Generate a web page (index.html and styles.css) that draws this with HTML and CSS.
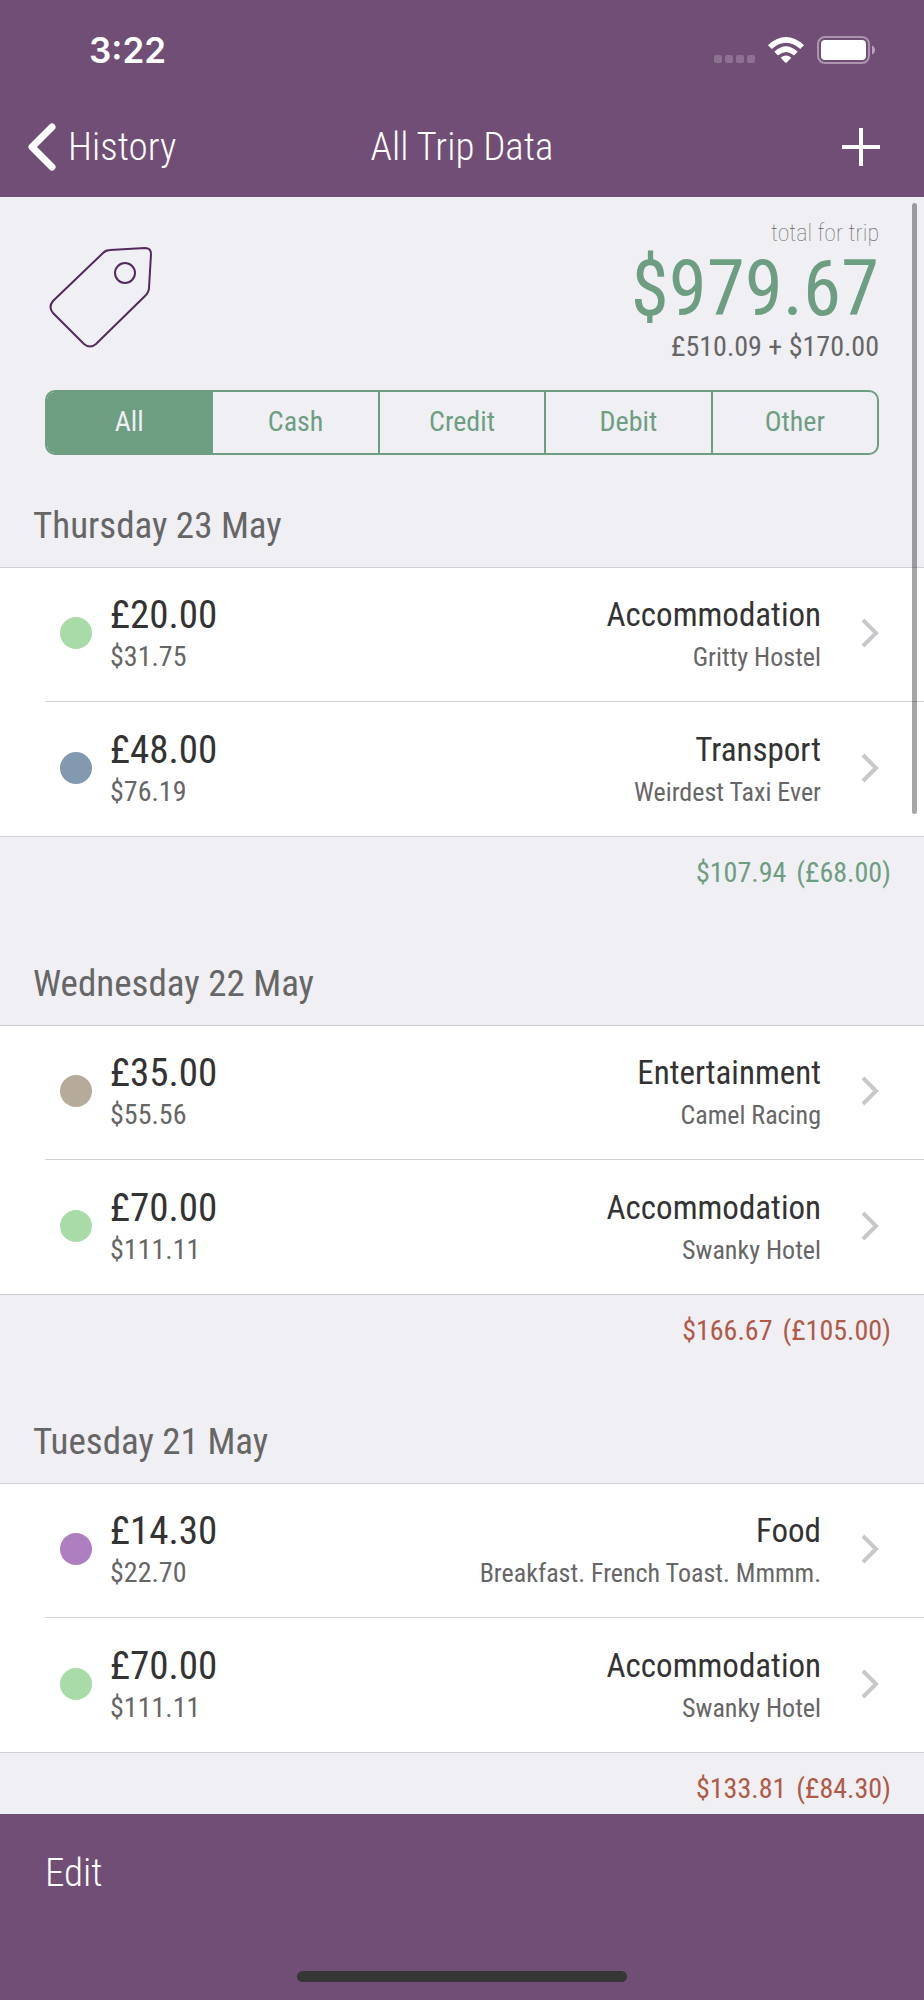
FILE: index.html
```html
<!DOCTYPE html>
<html lang="en">
<head>
  <meta charset="UTF-8"/>
  <meta name="viewport" content="width=device-width, initial-scale=1.0"/>
  <title>All Trip Data</title>
  <link rel="stylesheet" href="styles.css">
</head>
<body>

  <header>
    <div class="status-bar">
      <span class="time">3:22</span>
      <div class="status-icons">
        <svg class="signal" width="42" height="28" viewBox="0 0 42 28" aria-hidden="true">
          <rect x="1" y="19" width="8" height="8" rx="2"/>
          <rect x="12" y="19" width="8" height="8" rx="2"/>
          <rect x="23" y="19" width="8" height="8" rx="2"/>
          <rect x="34" y="19" width="8" height="8" rx="2"/>
        </svg>
        <svg class="wifi" width="38" height="28" viewBox="0 0 38 28" aria-hidden="true">
          <path d="M1 9.2Q19 -7 37 9.2L33.2 13Q19 0.4 4.8 13Z"/>
          <path d="M7.3 15.8Q19 4.8 30.7 15.8L27 19.4Q19 12.4 11 19.4Z"/>
          <path d="M13.6 21.7Q19 17.5 24.4 21.7L19.8 26.5Q19 27.2 18.2 26.5Z"/>
        </svg>
        <svg class="battery" width="59" height="28" viewBox="0 0 59 28" aria-hidden="true">
          <rect class="shell" x="1" y="1" width="51" height="26" rx="7"/>
          <rect class="charge" x="4" y="4" width="45" height="20" rx="4"/>
          <path class="tip" d="M55 9.5Q58 11 58 14Q58 17 55 18.5Z"/>
        </svg>
      </div>
    </div>
    <nav>
      <a class="back" href="#">
        <svg width="28" height="48" viewBox="0 0 28 48" aria-hidden="true">
          <path d="M24 4L4 24L24 44"/>
        </svg>
        History
      </a>
      <h1>All Trip Data</h1>
      <button class="add-btn" type="button" aria-label="Add expense">
        <svg width="38" height="38" viewBox="0 0 38 38" aria-hidden="true">
          <path d="M19 0V38M0 19H38"/>
        </svg>
      </button>
    </nav>
  </header>

  <main>
    <div class="scroll-thumb"></div>

    <!-- Trip total -->
    <section class="summary">
      <svg class="tag" width="104" height="104" viewBox="0 0 104 104" aria-hidden="true">
        <path d="M54 7Q57 4 61 4L96 2Q102 2 102 8L100 42Q100 46 96 50L47 98Q41 103 35 98L4 67Q-1 61 4 55Z"/>
        <circle cx="76" cy="27" r="10"/>
      </svg>
      <div class="totals">
        <p class="caption">total for trip</p>
        <p class="total">$979.67</p>
        <p class="breakdown">£510.09 + $170.00</p>
      </div>
    </section>

    <!-- Payment filter -->
    <div class="segments" role="group" aria-label="Payment type">
      <button class="active" type="button">All</button>
      <button type="button">Cash</button>
      <button type="button">Credit</button>
      <button type="button">Debit</button>
      <button type="button">Other</button>
    </div>

    <!-- Thursday -->
    <section class="day">
      <h2>Thursday 23 May</h2>
      <ul>
        <li><a href="#">
          <span class="dot accommodation"></span>
          <div class="amount"><p>£20.00</p><small>$31.75</small></div>
          <div class="details"><p>Accommodation</p><small>Gritty Hostel</small></div>
          <svg class="chevron" width="18" height="30" viewBox="0 0 18 30" aria-hidden="true"><path d="M2 2L15 15L2 28"/></svg>
        </a></li>
        <li><a href="#">
          <span class="dot transport"></span>
          <div class="amount"><p>£48.00</p><small>$76.19</small></div>
          <div class="details"><p>Transport</p><small>Weirdest Taxi Ever</small></div>
          <svg class="chevron" width="18" height="30" viewBox="0 0 18 30" aria-hidden="true"><path d="M2 2L15 15L2 28"/></svg>
        </a></li>
      </ul>
      <p class="day-total under"><span>$107.94</span><span>(£68.00)</span></p>
    </section>

    <!-- Wednesday -->
    <section class="day">
      <h2>Wednesday 22 May</h2>
      <ul>
        <li><a href="#">
          <span class="dot entertainment"></span>
          <div class="amount"><p>£35.00</p><small>$55.56</small></div>
          <div class="details"><p>Entertainment</p><small>Camel Racing</small></div>
          <svg class="chevron" width="18" height="30" viewBox="0 0 18 30" aria-hidden="true"><path d="M2 2L15 15L2 28"/></svg>
        </a></li>
        <li><a href="#">
          <span class="dot accommodation"></span>
          <div class="amount"><p>£70.00</p><small>$111.11</small></div>
          <div class="details"><p>Accommodation</p><small>Swanky Hotel</small></div>
          <svg class="chevron" width="18" height="30" viewBox="0 0 18 30" aria-hidden="true"><path d="M2 2L15 15L2 28"/></svg>
        </a></li>
      </ul>
      <p class="day-total over"><span>$166.67</span><span>(£105.00)</span></p>
    </section>

    <!-- Tuesday -->
    <section class="day">
      <h2>Tuesday 21 May</h2>
      <ul>
        <li><a href="#">
          <span class="dot food"></span>
          <div class="amount"><p>£14.30</p><small>$22.70</small></div>
          <div class="details"><p>Food</p><small>Breakfast. French Toast. Mmmm.</small></div>
          <svg class="chevron" width="18" height="30" viewBox="0 0 18 30" aria-hidden="true"><path d="M2 2L15 15L2 28"/></svg>
        </a></li>
        <li><a href="#">
          <span class="dot accommodation"></span>
          <div class="amount"><p>£70.00</p><small>$111.11</small></div>
          <div class="details"><p>Accommodation</p><small>Swanky Hotel</small></div>
          <svg class="chevron" width="18" height="30" viewBox="0 0 18 30" aria-hidden="true"><path d="M2 2L15 15L2 28"/></svg>
        </a></li>
      </ul>
      <p class="day-total over"><span>$133.81</span><span>(£84.30)</span></p>
    </section>
  </main>

  <footer>
    <button class="edit-btn" type="button">Edit</button>
    <div class="home-indicator"></div>
  </footer>

</body>
</html>
```
FILE: styles.css
```css
* {
  box-sizing: border-box;
}

body {
  font-family: 'Roboto Condensed', Roboto, sans-serif;
  margin: 0;
  height: 100vh;
  display: flex;
  flex-direction: column;
  background-color: #efeff4;
  color: #333;
}

h1, h2, p, ul {
  margin: 0;
  padding: 0;
  font-weight: normal;
}

button {
  font-family: inherit;
  background: none;
  border: none;
  padding: 0;
  cursor: pointer;
}

a {
  color: inherit;
  text-decoration: none;
}

svg {
  display: block;
  fill: none;
}

/* Header */
header {
  background-color: #714e75;
  color: white;
  flex-shrink: 0;
}

.status-bar {
  display: flex;
  justify-content: space-between;
  align-items: center;
  height: 100px;
  padding: 0 48px 0 89px;
}

.time {
  font-family: Inter, sans-serif;
  font-size: 35px;
  font-weight: 600;
}

.status-icons {
  display: flex;
  gap: 12px;
}

.signal {
  fill: rgba(255,255,255,0.2);
}

.wifi {
  fill: white;
}

.battery .shell {
  stroke: rgba(255,255,255,0.4);
  stroke-width: 2;
}

.battery .charge {
  fill: white;
}

.battery .tip {
  fill: rgba(255,255,255,0.5);
}

nav {
  display: grid;
  grid-template-columns: 1fr auto 1fr;
  align-items: center;
  height: 97px;
  padding: 0 28px 4px;
}

nav h1, .back, .edit-btn {
  font-size: 39px;
  font-weight: 300;
  line-height: 48px;
}

.back {
  display: flex;
  align-items: center;
  gap: 12px;
}

.back svg {
  stroke: white;
  stroke-width: 7;
  stroke-linecap: round;
  stroke-linejoin: round;
}

.add-btn {
  justify-self: end;
  margin-right: 16px;
}

.add-btn svg {
  stroke: white;
  stroke-width: 4;
}

/* Scrolling content */
main {
  position: relative;
  flex: 1;
  min-height: 0;
  overflow-y: auto;
  scrollbar-width: none;
}

.scroll-thumb {
  position: absolute;
  top: 6px;
  right: 7px;
  width: 5px;
  height: 611px;
  border-radius: 3px;
  background-color: rgba(0,0,0,0.35);
}

.summary {
  display: flex;
  justify-content: space-between;
  align-items: flex-start;
  height: 193px;
  padding: 20px 45px 0 49px;
}

.tag {
  margin-top: 29px;
  stroke: #532a5b;
  stroke-width: 2;
}

.totals {
  text-align: right;
}

.caption {
  font-size: 24px;
  font-weight: 100;
  line-height: 32px;
  color: #666;
}

.total {
  font-size: 77px;
  line-height: 80px;
  color: #6e9e82;
}

.breakdown {
  font-size: 28px;
  line-height: 36px;
  color: #666;
}

/* Segmented control */
.segments {
  display: flex;
  height: 65px;
  margin: 0 45px;
  border: 2px solid #6e9e82;
  border-radius: 10px;
  overflow: hidden;
}

.segments button {
  flex: 1;
  padding-bottom: 2px;
  font-size: 28px;
  color: #6e9e82;
  border-left: 2px solid #6e9e82;
}

.segments button:first-child {
  border-left: none;
}

.segments .active {
  background-color: #6e9e82;
  color: #efeff4;
}

/* Days */
.day h2 {
  height: 112px;
  padding: 47px 33px 0;
  font-size: 37px;
  line-height: 48px;
  color: #666;
}

.day ul {
  list-style: none;
  background-color: white;
  border-top: 1px solid #d2d2d6;
  border-bottom: 1px solid #d2d2d6;
}

.day li {
  height: 134px;
}

.day li a {
  display: flex;
  align-items: center;
  height: 100%;
  margin-left: 45px;
  padding: 0 45px 3px 15px;
}

.day li:first-child a {
  border-bottom: 1px solid #d2d2d6;
}

.day li p, .day small {
  display: block;
}

.dot {
  width: 32px;
  height: 32px;
  border-radius: 50%;
}

.accommodation { background-color: #a9dba9; }
.transport { background-color: #8299b0; }
.entertainment { background-color: #b6aa9a; }
.food { background-color: #ae7fc0; }

.amount {
  flex: 1;
  margin-left: 18px;
}

.amount p {
  font-size: 39px;
  line-height: 48px;
}

.amount small {
  font-size: 28px;
  line-height: 36px;
  color: #666;
}

.details {
  text-align: right;
  margin-right: 40px;
}

.details p {
  font-size: 33px;
  line-height: 48px;
}

.details small {
  font-size: 26px;
  line-height: 36px;
  color: #666;
}

.chevron {
  stroke: #c7c7cc;
  stroke-width: 4;
}

.day-total {
  display: flex;
  justify-content: flex-end;
  gap: 10px;
  height: 76px;
  padding: 18px 33px 0;
  font-size: 28px;
  line-height: 36px;
}

.under { color: #6e9e82; }
.over { color: #b05a47; }

/* Bottom toolbar */
footer {
  display: flex;
  flex-direction: column;
  align-items: center;
  justify-content: space-between;
  flex-shrink: 0;
  height: 186px;
  padding: 34px 45px 18px;
  background-color: #714e75;
  border-top: 1px solid #66506b;
}

.edit-btn {
  align-self: flex-start;
  color: white;
}

.home-indicator {
  width: 330px;
  height: 11px;
  border-radius: 6px;
  background-color: #363636;
}
```
